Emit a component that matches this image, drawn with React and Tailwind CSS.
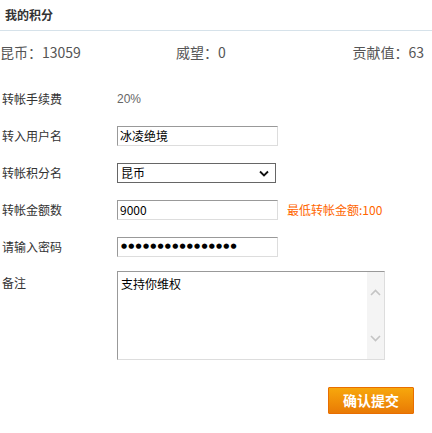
const font = "font-['Microsoft_YaHei','Noto_Sans_CJK_SC',sans-serif]";

const Row = ({ label, children, top }) => (
  <div className={`flex ${top ? "items-start mt-[6px]" : "items-center h-[37px]"}`}>
    <div className={`w-[117px] shrink-0 pl-[2px] text-[12px] text-[#333] ${top ? "pt-[3px]" : ""}`}>
      {label}
    </div>
    {children}
  </div>
);

const inputCls =
  "w-[161px] h-[20px] border border-t-[#999] border-l-[#999] border-r-[#ddd] border-b-[#ddd] px-[2px] text-[12px] text-black outline-none";

export default function App() {
  return (
    <div className={`relative w-[432px] h-[433px] bg-white overflow-hidden ${font}`}>
      <div className="h-[31px] pl-[5px] pt-[6px] text-[12px] font-bold text-[#333] border-b border-[#d6e2ea]">
        我的积分
      </div>
      <div className="flex items-center h-[40px] pt-[2px] text-[14px] text-[#555]">
        <span className="w-[176px]">昆币：13059</span>
        <span className="flex-1">威望：0</span>
        <span className="pr-[8px]">贡献值：63</span>
      </div>

      <div className="pt-[9px]">
        <Row label="转帐手续费">
          <span className="text-[12px] text-[#666] font-['Liberation_Sans',sans-serif]">20%</span>
        </Row>
        <Row label="转入用户名">
          <input className={inputCls} defaultValue="冰凌绝境" />
        </Row>
        <Row label="转帐积分名">
          <div className="relative w-[159px] h-[20px] border border-[#666] flex items-center px-[3px] text-[12px] text-black">
            昆币
            <svg className="absolute right-[6px] top-[6px]" width="10" height="7" viewBox="0 0 10 7">
              <path d="M1 1.5L5 5.5L9 1.5" fill="none" stroke="#111" strokeWidth="1.8" />
            </svg>
          </div>
        </Row>
        <Row label="转帐金额数">
          <input className={inputCls} defaultValue="9000" />
          <span className="ml-[9px] text-[12px] text-[#ff6600]">最低转帐金额:100</span>
        </Row>
        <Row label="请输入密码">
          <div className="w-[161px] h-[20px] border border-t-[#999] border-l-[#999] border-r-[#ddd] border-b-[#ddd] pl-[3px] flex items-center text-[7px] leading-none tracking-[1.2px] text-black font-['DejaVu_Sans',sans-serif] overflow-hidden">
            ●●●●●●●●●●●●●●●●
          </div>
        </Row>
        <Row label="备注" top>
          <div className="flex w-[268px] h-[89px] border border-t-[#999] border-l-[#999] border-r-[#ddd] border-b-[#ddd]">
            <div className="flex-1 px-[3px] pt-[3px] text-[12px] text-black">支持你维权</div>
            <div className="w-[17px] bg-[#f4f4f4] flex flex-col items-center justify-between py-[17px]">
              <svg width="11" height="7" viewBox="0 0 11 7">
                <path d="M1 6L5.5 1.5L10 6" fill="none" stroke="#c4c4c4" strokeWidth="1.6" />
              </svg>
              <svg width="11" height="7" viewBox="0 0 11 7">
                <path d="M1 1L5.5 5.5L10 1" fill="none" stroke="#c4c4c4" strokeWidth="1.6" />
              </svg>
            </div>
          </div>
        </Row>
      </div>

      <div className="flex justify-end pr-[18px] pt-[27px]">
        <button className="w-[86px] h-[27px] border border-[#e86e00] bg-gradient-to-b from-[#f7a70c] to-[#e97a05] text-white text-[14px] font-bold rounded-[1px]">
          确认提交
        </button>
      </div>
    </div>
  );
}
